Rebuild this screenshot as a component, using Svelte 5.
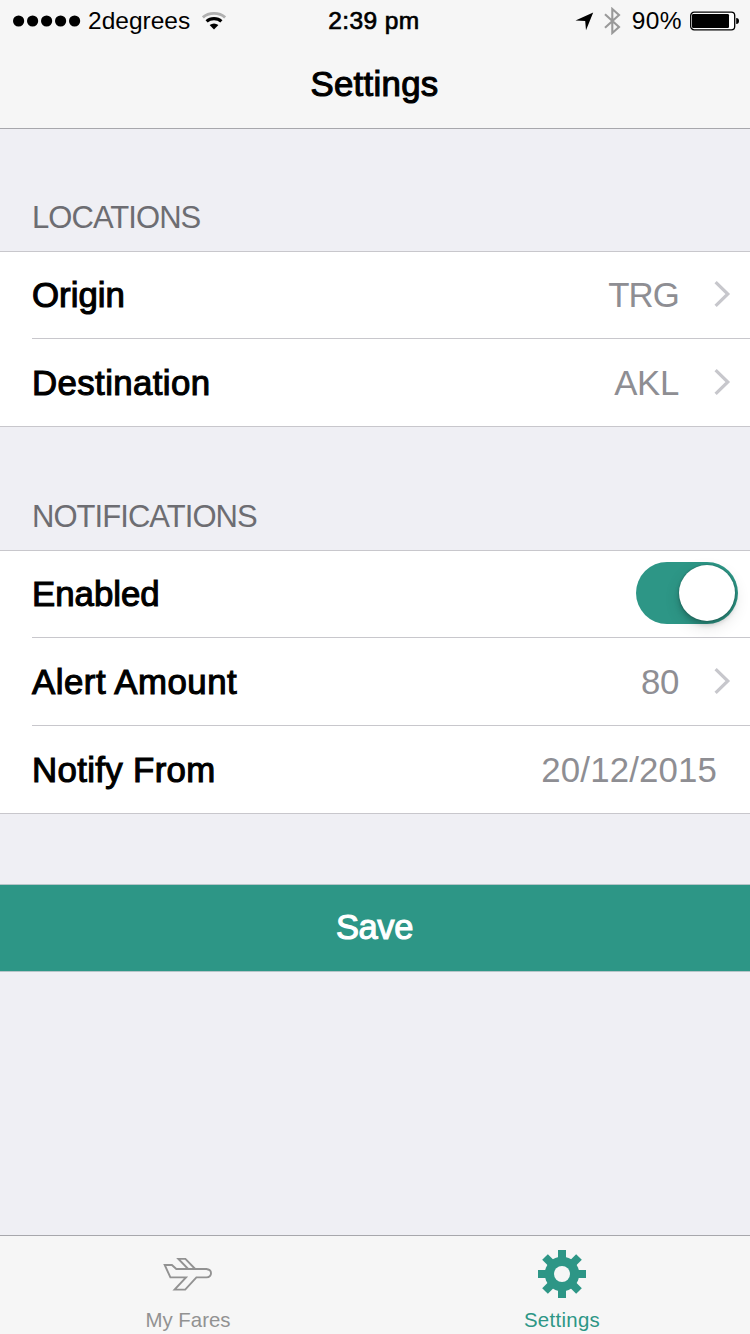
<script>
  const groups = [
    {
      title: 'LOCATIONS',
      track: -0.95,
      rows: [
        { label: 'Origin', track: 0, value: 'TRG', valueTrack: -0.9, arrow: true },
        { label: 'Destination', track: 0.4, value: 'AKL', valueTrack: -0.3, arrow: true }
      ]
    },
    {
      title: 'NOTIFICATIONS',
      track: -0.95,
      rows: [
        { label: 'Enabled', track: 0, toggle: true },
        { label: 'Alert Amount', track: 0.5, value: '80', valueTrack: -0.3, arrow: true },
        { label: 'Notify From', track: 0.35, value: '20/12/2015', valueTrack: 0.15 }
      ]
    }
  ];
  let enabled = $state(true);
</script>

<div class="screen">
  <header>
    <div class="status">
      <div class="carrier">
        <svg width="68" height="14" viewBox="0 0 68 14">
          {#each [0, 1, 2, 3, 4] as i}
            <circle cx={5.6 + i * 14} cy="7" r="5.6" />
          {/each}
        </svg>
        <span class="network">2degrees</span>
        <svg class="wifi" width="24" height="20" viewBox="0 0 24 20">
          <path d="M0.9 6.4Q5.2 2.3 12 2.3T23.1 6.4" fill="none" stroke="#b0b0b0" stroke-width="2.8" />
          <path d="M4.6 10.4Q7.6 7.6 12 7.6T19.4 10.4" fill="none" stroke="#000" stroke-width="3.1" />
          <path d="M7.6 13.9Q12 10.9 16.4 13.9L12 18.6Z" />
        </svg>
      </div>
      <div class="time">2:39 pm</div>
      <div class="indicators">
        <svg width="19" height="19" viewBox="0 0 19 19"><path d="M18.2 0.4L11 18.2L10.2 8.9L0.5 8.4Z" /></svg>
        <svg class="bluetooth" width="17" height="28" viewBox="0 0 17 28">
          <path d="M1 7.2L15 20L8.3 26V2L15 8L1 20.8" fill="none" stroke="#999" stroke-width="2.1" />
        </svg>
        <span class="percent">90%</span>
        <svg class="battery" width="50" height="20" viewBox="0 0 50 20">
          <rect x="0.7" y="1.2" width="44" height="17.6" rx="3.4" fill="#fff" stroke="#000" stroke-width="1.3" />
          <rect x="2" y="3" width="37" height="14" rx="1.2" />
          <path d="M46.2 7Q49 7.2 49 10T46.2 13Z" />
        </svg>
      </div>
    </div>
    <h1>Settings</h1>
  </header>

  <main>
    {#each groups as group}
      <section>
        <h2 style:letter-spacing="{group.track}px">{group.title}</h2>
        <div class="list">
          {#each group.rows as row}
            <div class="row">
              <span class="label" style:letter-spacing="{row.track}px">{row.label}</span>
              {#if row.toggle}
                <button class="switch" class:on={enabled} aria-label="Enabled" onclick={() => (enabled = !enabled)}>
                  <span class="knob"></span>
                </button>
              {:else}
                <span class="value" class:plain={!row.arrow} style:letter-spacing="{row.valueTrack}px">{row.value}</span>
              {/if}
              {#if row.arrow}
                <svg class="chevron" width="17" height="28" viewBox="0 0 17 28">
                  <path d="M1.6 2.1L13.8 14L1.6 25.9" fill="none" stroke="#c7c7cc" stroke-width="3.2" />
                </svg>
              {/if}
            </div>
          {/each}
        </div>
      </section>
    {/each}
    <button class="save">Save</button>
  </main>

  <nav>
    <div class="tab">
      <svg width="50" height="50" viewBox="0 0 50 50">
        <g fill="none" stroke="#929292" stroke-width="1.9">
          <path d="M1.7 16H8.9L13.3 20H43.4Q48 20.4 48 24.2T43.4 28.4H33.4L22.2 40.6H11.6L23 28.4H7.4Z" />
          <path d="M25.2 20L15.4 9.9H22.4L32.2 20" />
        </g>
      </svg>
      <span class="fares">My Fares</span>
    </div>
    <div class="tab active">
      <svg width="50" height="50" viewBox="0 0 50 50">
        <g fill="#2d9686">
          {#each [0, 45, 90, 135] as angle}
            <rect x="21" y="1" width="8" height="48" transform="rotate({angle} 25 25)" />
          {/each}
          <circle cx="25" cy="25" r="17.3" />
        </g>
        <circle cx="25" cy="25" r="8" fill="#f6f6f6" />
      </svg>
      <span>Settings</span>
    </div>
  </nav>
</div>

<style>
  :global(body) {
    margin: 0;
  }
  .screen {
    width: 750px;
    height: 1334px;
    display: flex;
    flex-direction: column;
    overflow: hidden;
    background: #efeff4;
    font-family: 'Liberation Sans', Arial, sans-serif;
    color: #000;
  }
  svg {
    display: block;
    flex: none;
  }
  header {
    height: 128px;
    background: #f6f6f6;
    border-bottom: 1px solid #a7a7ac;
  }
  .status {
    height: 40px;
    padding-top: 1px;
    display: grid;
    grid-template-columns: 1fr auto 1fr;
    align-items: center;
    font-size: 24.5px;
    line-height: 40px;
  }
  .carrier {
    display: flex;
    align-items: center;
    padding-left: 13px;
  }
  .network {
    width: 105px;
    margin: 0 9px 0 7px;
    letter-spacing: 0;
  }
  .time {
    padding-right: 2px;
    letter-spacing: 0.4px;
    -webkit-text-stroke: 0.7px #000;
  }
  .indicators {
    display: flex;
    align-items: center;
    justify-content: flex-end;
    padding-right: 10px;
  }
  .bluetooth {
    margin-left: 10px;
  }
  .percent {
    margin: 0 8px 0 11px;
    letter-spacing: 0.4px;
  }
  h1 {
    margin: 0;
    height: 87px;
    padding-right: 1px;
    line-height: 86px;
    text-align: center;
    font-size: 34.8px;
    font-weight: 400;
    letter-spacing: 0.3px;
    -webkit-text-stroke: 1.1px #000;
  }
  main {
    flex: 1;
    display: flex;
    flex-direction: column;
  }
  h2 {
    margin: 0;
    height: 122px;
    box-sizing: border-box;
    padding: 71px 0 0 32px;
    font-size: 31px;
    line-height: 36px;
    font-weight: 400;
    color: #6d6d72;
  }
  section + section h2 {
    height: 123px;
    padding-top: 72px;
  }
  .list {
    background: #fff;
    border-top: 1px solid #c8c7cc;
    border-bottom: 1px solid #c8c7cc;
  }
  .row {
    height: 87px;
    margin-left: 32px;
    display: flex;
    align-items: center;
    font-size: 34.8px;
    line-height: 87px;
  }
  .row:first-child {
    height: 86px;
    line-height: 86px;
  }
  .row + .row {
    border-top: 1px solid #c8c7cc;
  }
  .label {
    flex: 1;
    -webkit-text-stroke: 1.1px #000;
  }
  .value {
    color: #8e8e93;
    margin-right: 35px;
  }
  .plain {
    margin-right: 33px;
  }
  .chevron {
    margin: 0 19px 2px 0;
  }
  .switch {
    width: 102px;
    height: 62px;
    margin: 0 12px 2px 0;
    padding: 3px;
    border: 0;
    border-radius: 31px;
    background: #d5d5da;
    display: flex;
  }
  .switch.on {
    background: #2d9686;
    justify-content: flex-end;
  }
  .knob {
    width: 56px;
    height: 56px;
    border-radius: 50%;
    background: #fff;
    box-shadow: 0 6px 16px rgba(0, 0, 0, 0.12), 0 4px 5px rgba(0, 0, 0, 0.18), 0 0 2px rgba(0, 0, 0, 0.3);
  }
  .save {
    margin: 70px 0 0;
    height: 88px;
    padding: 0 1px 2px 0;
    border: 0;
    border-top: 1px solid #b5c5c8;
    border-bottom: 1px solid #b5c5c8;
    background: #2d9686;
    color: #fff;
    font: 34.5px/84px 'Liberation Sans', Arial, sans-serif;
    letter-spacing: -0.4px;
    -webkit-text-stroke: 1.1px #fff;
  }
  nav {
    height: 98px;
    border-top: 1px solid #a7a7ac;
    background: #f6f6f6;
    display: flex;
    padding-left: 1px;
  }
  .tab {
    width: 374px;
    padding-top: 13px;
    display: flex;
    flex-direction: column;
    align-items: center;
    gap: 8px;
    font-size: 20.4px;
    line-height: 26px;
    color: #929292;
    letter-spacing: 0.3px;
  }
  .fares {
    letter-spacing: 0;
  }
  .active {
    color: #2d9686;
  }
</style>
